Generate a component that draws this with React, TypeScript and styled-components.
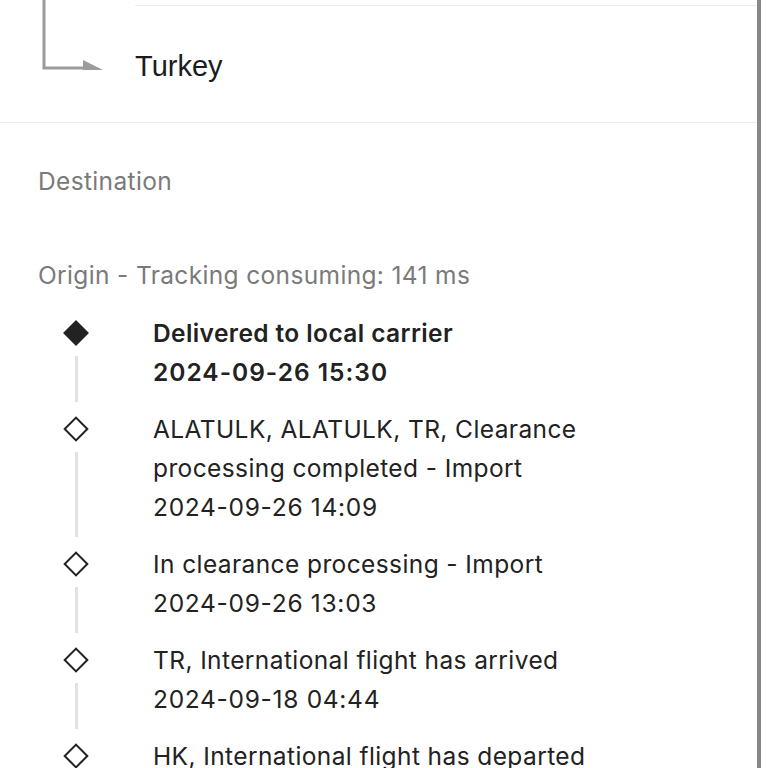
import React from "react";
import styled, { createGlobalStyle } from "styled-components";

const Global = createGlobalStyle`
  html, body { margin: 0; padding: 0; background: #fff; }
  body { font-family: Inter, "Noto Sans", sans-serif; -webkit-font-smoothing: antialiased; }
`;

const Panel = styled.div`
  width: 757px;
  height: 768px;
  overflow: hidden;
  border-right: 4px solid #888;
  background: #fff;
`;

const RouteSection = styled.div`
  display: grid;
  grid-template-columns: 135px 1fr;
  height: 122px;
  border-bottom: 1px solid #ececec;
`;

const Connector = styled.svg`
  display: block;
  width: 135px;
  height: 122px;
`;

const RouteCol = styled.div`
  display: flex;
  flex-direction: column;
`;

const PrevItem = styled.div`
  height: 5px;
  border-bottom: 1px solid #ececec;
`;

const Country = styled.div`
  font-family: "Liberation Sans", Arial, sans-serif;
  font-size: 29px;
  color: #1c1c1c;
  line-height: 40px;
  margin-top: 40px;
`;

const Label = styled.div<{ $top: number }>`
  font-size: 24.5px;
  letter-spacing: 0.35px;
  color: #7a7a7a;
  line-height: 30px;
  padding-left: 38px;
  margin-top: ${(p) => p.$top}px;
`;

const Timeline = styled.div`
  display: flex;
  flex-direction: column;
  margin-top: 24px;
`;

const Item = styled.div`
  display: grid;
  grid-template-columns: 153px 1fr;
`;

const MarkerCol = styled.div`
  display: flex;
  flex-direction: column;
  align-items: center;
  width: 152px;
  padding-top: 10px;
`;

const Diamond = styled.div<{ $filled: boolean }>`
  width: 18px;
  height: 18px;
  transform: rotate(45deg);
  box-sizing: border-box;
  background: ${(p) => (p.$filled ? "#222" : "#fff")};
  border: 2px solid #222;
  flex: none;
`;

const Stem = styled.div`
  width: 3px;
  flex: 1;
  background: #e2e2e2;
  margin: 14px 0 8px;
`;

const Body = styled.div<{ $bold: boolean }>`
  font-size: 24.5px;
  letter-spacing: 0.4px;
  line-height: 39px;
  color: #222;
  font-weight: ${(p) => (p.$bold ? 600 : 400)};
  padding-bottom: 18px;
  white-space: nowrap;
`;

const DateLine = styled.div<{ $bold: boolean }>`
  letter-spacing: ${(p) => (p.$bold ? 1 : 0.7)}px;
`;

const events = [
  { lines: ["Delivered to local carrier"], date: "2024-09-26 15:30", bold: true },
  {
    lines: ["ALATULK, ALATULK, TR, Clearance", "processing completed - Import"],
    date: "2024-09-26 14:09",
    bold: false,
  },
  { lines: ["In clearance processing - Import"], date: "2024-09-26 13:03", bold: false },
  { lines: ["TR, International flight has arrived"], date: "2024-09-18 04:44", bold: false },
  { lines: ["HK, International flight has departed"], date: "2024-09-17 20:15", bold: false },
];

export default function App() {
  return (
    <>
      <Global />
      <Panel>
        <RouteSection>
          <Connector viewBox="0 0 135 122">
            <path d="M44 0 V68 H88" fill="none" stroke="#9b9b9b" strokeWidth="3" />
            <path d="M83 60 L103 70 L83 70 Z" fill="#9b9b9b" />
          </Connector>
          <RouteCol>
            <PrevItem />
            <Country>Turkey</Country>
          </RouteCol>
        </RouteSection>
        <Label $top={43}>Destination</Label>
        <Label $top={64}>Origin - Tracking consuming: 141 ms</Label>
        <Timeline>
          {events.map((e, i) => (
            <Item key={i}>
              <MarkerCol>
                <Diamond $filled={i === 0} />
                <Stem />
              </MarkerCol>
              <Body $bold={e.bold}>
                {e.lines.map((l, j) => (
                  <div key={j}>{l}</div>
                ))}
                <DateLine $bold={e.bold}>{e.date}</DateLine>
              </Body>
            </Item>
          ))}
        </Timeline>
      </Panel>
    </>
  );
}
